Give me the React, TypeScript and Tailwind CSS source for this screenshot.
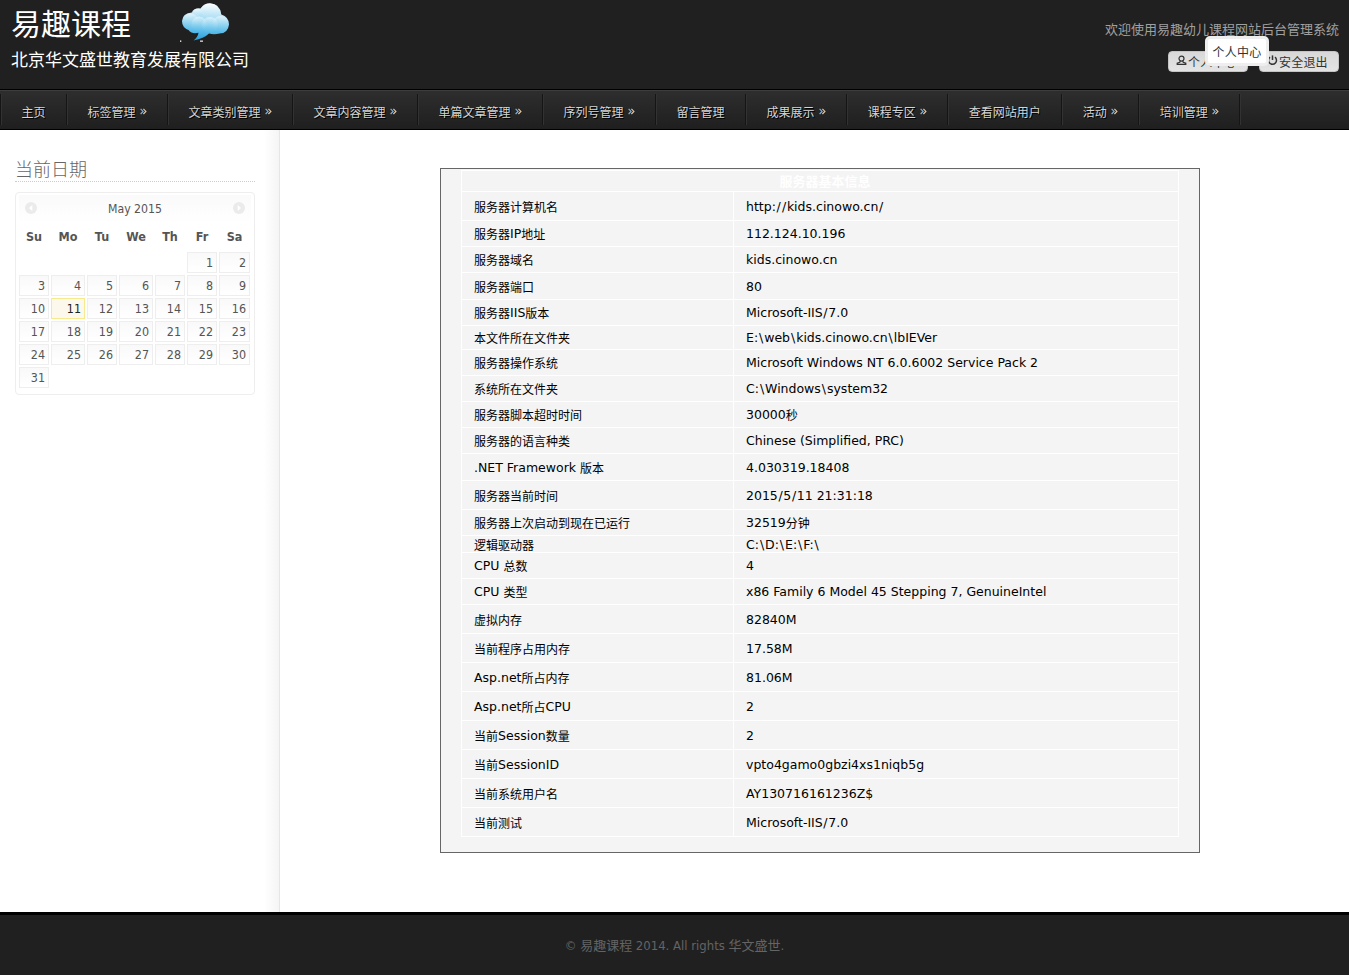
import React from "react";

const NAV: { label: string; more: boolean }[] = [
  { label: "主页", more: false },
  { label: "标签管理", more: true },
  { label: "文章类别管理", more: true },
  { label: "文章内容管理", more: true },
  { label: "单篇文章管理", more: true },
  { label: "序列号管理", more: true },
  { label: "留言管理", more: false },
  { label: "成果展示", more: true },
  { label: "课程专区", more: true },
  { label: "查看网站用户", more: false },
  { label: "活动", more: true },
  { label: "培训管理", more: true },
];

// label, value, row height including its bottom rule
const ROWS: [string, string, number][] = [
  ["服务器计算机名", "http://kids.cinowo.cn/", 29],
  ["服务器IP地址", "112.124.10.196", 26],
  ["服务器域名", "kids.cinowo.cn", 26],
  ["服务器端口", "80", 27],
  ["服务器IIS版本", "Microsoft-IIS/7.0", 26],
  ["本文件所在文件夹", "E:\\web\\kids.cinowo.cn\\lbIEVer", 24],
  ["服务器操作系统", "Microsoft Windows NT 6.0.6002 Service Pack 2", 26],
  ["系统所在文件夹", "C:\\Windows\\system32", 26],
  ["服务器脚本超时时间", "30000秒", 26],
  ["服务器的语言种类", "Chinese (Simplified, PRC)", 26],
  [".NET Framework 版本", "4.030319.18408", 27],
  ["服务器当前时间", "2015/5/11 21:31:18", 29],
  ["服务器上次启动到现在已运行", "32519分钟", 26],
  ["逻辑驱动器", "C:\\D:\\E:\\F:\\", 17],
  ["CPU 总数", "4", 26],
  ["CPU 类型", "x86 Family 6 Model 45 Stepping 7, GenuineIntel", 26],
  ["虚拟内存", "82840M", 29],
  ["当前程序占用内存", "17.58M", 29],
  ["Asp.net所占内存", "81.06M", 29],
  ["Asp.net所占CPU", "2", 29],
  ["当前Session数量", "2", 29],
  ["当前SessionID", "vpto4gamo0gbzi4xs1niqb5g", 29],
  ["当前系统用户名", "AY130716161236Z$", 29],
  ["当前测试", "Microsoft-IIS/7.0", 29],
];

const DOW = ["Su", "Mo", "Tu", "We", "Th", "Fr", "Sa"];
const DAYS: (number | null)[] = [
  null, null, null, null, null,
  ...Array.from({ length: 31 }, (_, i) => i + 1),
];

// Latin runs are set slightly larger than the CJK runs beside them,
// and slashes get a little room on both sides
function Mixed({ text }: { text: string }) {
  const parts = text.match(/[\\/]|[\x20-\x2e\x30-\x5b\x5d-\x7e]+|[^\x20-\x7e]+/g) ?? [];
  return (
    <>
      {parts.map((p, i) => {
        if (p === "/" || p === "\\") {
          return (
            <span key={i} className={p === "/" ? "px-[0.65px] text-[12.5px]" : "px-[0.95px] text-[12.5px]"}>
              {p}
            </span>
          );
        }
        return /^[\x20-\x7e]/.test(p) ? (
          <span key={i} className="text-[12.5px]">{p}</span>
        ) : (
          <span key={i} className="relative top-px">{p}</span>
        );
      })}
    </>
  );
}

function Cloud() {
  return (
    <svg className="absolute left-[180px] top-[2px]" width="52" height="42" viewBox="0 0 52 42">
      <defs>
        <linearGradient id="body" gradientUnits="userSpaceOnUse" x1="26" y1="1" x2="24" y2="38">
          <stop offset="0" stopColor="#ffffff" />
          <stop offset="0.4" stopColor="#b4e2f5" />
          <stop offset="0.75" stopColor="#5bbdea" />
          <stop offset="1" stopColor="#2b9edb" />
        </linearGradient>
        <linearGradient id="puff" x1="0" y1="0" x2="0" y2="1">
          <stop offset="0" stopColor="#ffffff" stopOpacity="0.55" />
          <stop offset="0.8" stopColor="#7fcdef" stopOpacity="0.15" />
          <stop offset="1" stopColor="#7fcdef" stopOpacity="0" />
        </linearGradient>
      </defs>
      <path
        d="M13.5 38.5 Q18 35 18.5 30.8 Q12 32.5 8.5 28 Q2 25.5 2 19 Q2.5 11 12 10.5 Q14.5 5.5 20.5 6.5 Q24 1.3 30 1.3 Q40 2 41.3 12.5 Q49 15 49 22.5 Q48 31.5 39.5 31.5 Q34 33 29 31.5 Q24 36.5 13.5 38.5 Z"
        fill="url(#body)"
      />
      <circle cx="30" cy="12.5" r="11" fill="url(#puff)" />
      <circle cx="17" cy="12.5" r="5.8" fill="url(#puff)" />
      <circle cx="10.5" cy="19.5" r="8" fill="url(#puff)" />
      <circle cx="19" cy="22" r="7.5" fill="url(#puff)" />
      <circle cx="40.5" cy="22" r="8" fill="url(#puff)" />
      <circle cx="30" cy="23" r="8" fill="url(#puff)" />
      <rect x="0" y="38.5" width="1.3" height="1.3" fill="#fff" />
      <rect x="20" y="38.5" width="3" height="1.3" fill="#ddd" />
    </svg>
  );
}

function Chevron() {
  return (
    <svg width="7" height="7" viewBox="0 0 7 7" className="relative top-[2px] ml-1" fill="none" strokeWidth="1.2">
      <path d="M0.6 0.8 L3.1 3.4 L0.6 6" stroke="#7fb0d6" />
      <path d="M3.4 0.8 L5.9 3.4 L3.4 6" stroke="#e2c49c" />
    </svg>
  );
}

function Arrow({ left }: { left?: boolean }) {
  return (
    <svg width="12" height="12" viewBox="0 0 12 12" className="relative -top-px">
      <circle cx="6" cy="6" r="6" fill="#ebebeb" />
      <path d={left ? "M7.3 3 L4 6 L7.3 9 Z" : "M4.7 3 L8 6 L4.7 9 Z"} fill="#fff" />
    </svg>
  );
}

function Button({ icon, label }: { icon: React.ReactNode; label: string }) {
  return (
    <div className="flex h-[21px] w-[80px] items-center rounded-[4px] border border-[#c4c4c4] bg-linear-to-b from-[#d8d8d8] to-[#e4e4e4] pl-[7px] text-[12px] leading-[18px] text-[#333]">
      {icon}
      <span className="relative top-px ml-px whitespace-nowrap tracking-[0.2px]">{label}</span>
    </div>
  );
}

export default function App() {
  return (
    <div className="flex h-[975px] w-[1349px] flex-col overflow-hidden bg-white font-['DejaVu_Sans_Condensed','DejaVu_Sans','Noto_Sans_CJK_SC',sans-serif] text-[12px]">
      <header className="relative flex h-[89px] shrink-0 justify-between bg-[#202020]">
        <div className="flex flex-col pl-[11px] font-['Noto_Sans_CJK_SC',sans-serif] text-white">
          <div className="mt-[2px] text-[30px] leading-[40px]">易趣课程</div>
          <div className="mt-[5px] text-[17px] leading-[24px]">北京华文盛世教育发展有限公司</div>
        </div>
        <Cloud />
        <div className="flex flex-col items-end pr-[10px]">
          <div className="mt-[20px] text-[13px] leading-[20px] text-[#a0a0a0]">
            欢迎使用易趣幼儿课程网站后台管理系统
          </div>
          <div className="mt-[11px] flex gap-[11px]">
            <Button
              label="个人中心"
              icon={
                <svg width="11" height="11" viewBox="0 0 11 11" className="relative -top-px" fill="none" stroke="#333" strokeWidth="1.2">
                  <circle cx="5.5" cy="3.6" r="2.5" />
                  <path d="M4.3 5.8 L3.8 7.2 L1.2 8.2 V9.4 H9.8 V8.2 L7.2 7.2 L6.7 5.8" />
                </svg>
              }
            />
            <Button
              label="安全退出"
              icon={
                <svg width="11" height="11" viewBox="0 0 11 11" className="relative -top-px" fill="none" stroke="#333" strokeWidth="1.5">
                  <path d="M3 2.2 A4 4 0 1 0 8 2.2" />
                  <path d="M5.5 0.4 V5" />
                </svg>
              }
            />
          </div>
        </div>
        <div className="absolute left-[1205px] top-[36px] flex h-[30px] w-[64px] items-center justify-center rounded-[5px] border-[3px] border-[#eee] bg-white text-[12px] leading-[18px] tracking-[0.2px] text-[#333]">
          <span className="relative top-[2px]">个人中心</span>
        </div>
      </header>

      <nav className="flex h-[41px] shrink-0 items-start border-b border-t border-black bg-linear-to-b from-[#2e2e2e] to-[#1f1f1f] shadow-[inset_0_1px_0_#3d3d3d]">
        <div className="mt-[4px] h-[31px] w-[2px] border-l border-r border-l-[#151515] border-r-[#323232]" />
        {NAV.map((n) => (
          <div
            key={n.label}
            className="mt-[4px] flex h-[31px] items-center border-r border-[#323232] text-[12px] leading-[20px] text-[#d4d4d4] [text-shadow:1px_1px_0_#000]"
          >
            <div className="flex h-[31px] items-center border-r border-[#151515] px-[20px]">
              <span className="relative -left-[0.5px] top-[3px]">{n.label}</span>
              {n.more && <Chevron />}
            </div>
          </div>
        ))}
      </nav>

      <div className="flex min-h-0 flex-1">
        <aside className="flex w-[280px] shrink-0 justify-between border-r border-[#e6e6e6]">
          <div className="ml-[15px] w-[240px]">
            <h2 className="mt-[26px] h-[26px] border-b border-dotted border-[#ccc] text-[18px] font-light leading-[27px] text-[#666]">
              当前日期
            </h2>
            <div className="mt-[10px] h-[203px] rounded-[4px] border border-[#eee] px-[3px] text-[#555]">
              <div className="mt-[2px] flex h-[28px] items-center justify-between bg-linear-to-b from-[#fafafa] to-white px-[6px]">
                <Arrow left />
                <span className="text-[12.2px]">May 2015</span>
                <Arrow />
              </div>
              <div className="grid h-[29px] grid-cols-[30px_34px_30px_34px_30px_30px_31px] items-center gap-x-[2px] text-center text-[12.5px] font-bold text-[#555]">
                {DOW.map((d) => (
                  <span key={d}>{d}</span>
                ))}
              </div>
              <div className="grid grid-cols-[30px_34px_30px_34px_30px_30px_31px] gap-[2px]">
                {DAYS.map((d, i) =>
                  d === null ? (
                    <span key={i} />
                  ) : (
                    <span
                      key={i}
                      className={
                        d === 11
                          ? "h-[21px] border border-[#f7e98e] bg-[#fcf9ec] pr-[3px] text-right text-[12.4px] leading-[19px] text-[#222]"
                          : "h-[21px] border border-[#eee] bg-linear-to-b from-[#f9f9f9] to-white pr-[3px] text-right text-[12.4px] leading-[19px]"
                      }
                    >
                      {d}
                    </span>
                  ),
                )}
              </div>
            </div>
          </div>
          <div className="w-[15px] bg-linear-to-r from-white to-[#f5f5f5]" />
        </aside>

        <main className="pl-[160px] pt-[38px]">
          <div className="h-[685px] w-[760px] border border-[#666] bg-[#f4f4f4] pl-[20px] pt-px">
            <div className="w-[718px] border-x border-t border-white font-['DejaVu_Sans','Noto_Sans_CJK_SC',sans-serif] text-[12px] leading-[16px] text-black">
              <div className="flex h-[21px] items-center justify-center border-b border-white pl-[10px] text-[13px] font-bold text-white">
                <span className="relative top-px">服务器基本信息</span>
              </div>
              {ROWS.map(([label, value, h], i) => (
                <div
                  key={i}
                  className={h % 2 === 1 ? "flex border-b border-white [&>div]:pt-px" : "flex border-b border-white"}
                  style={{ height: h }}
                >
                  <div className="flex w-[272px] items-center border-r border-white pl-[12px] whitespace-pre">
                    <div><Mixed text={label} /></div>
                  </div>
                  <div className="flex items-center pl-[12px] whitespace-pre">
                    <div><Mixed text={value} /></div>
                  </div>
                </div>
              ))}
            </div>
          </div>
        </main>
      </div>

      <footer className="flex h-[63px] shrink-0 justify-center border-t-[3px] border-black bg-[#202020] pt-[21px] text-[13px] leading-[20px] text-[#646464]">
        © 易趣课程 2014. All rights 华文盛世.
      </footer>
    </div>
  );
}
